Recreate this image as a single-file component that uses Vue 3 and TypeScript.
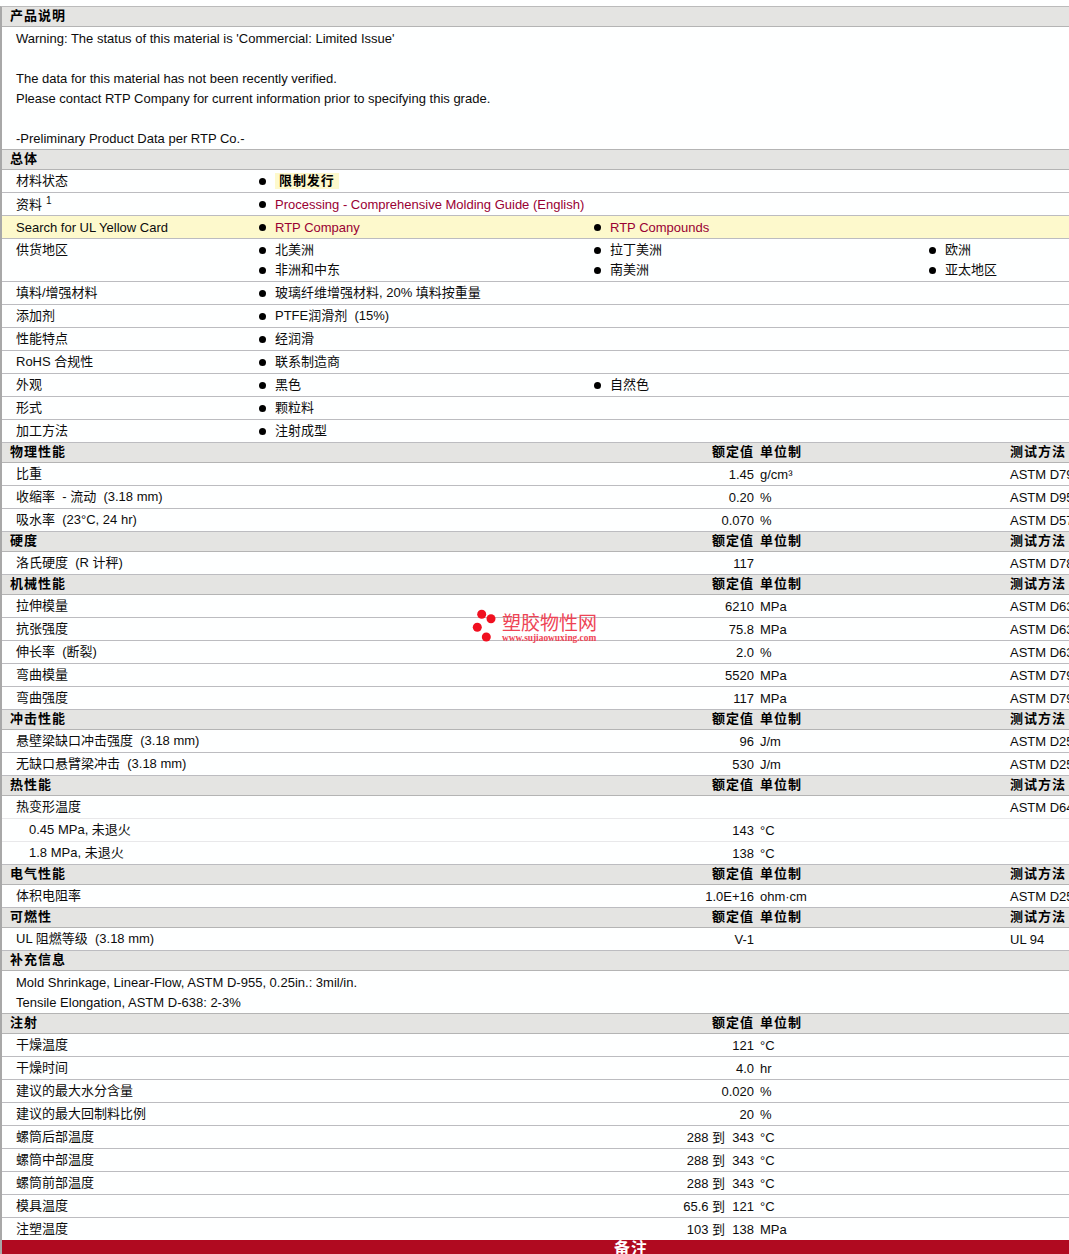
<script setup lang="ts">
interface Row { label: string; indent?: boolean; light?: boolean; val?: string; unit?: string; test?: string }
interface Section { title: string; head?: boolean; noTest?: boolean; rows?: Row[]; notes?: string[] }
const warn: string[] = [
  "Warning: The status of this material is 'Commercial: Limited Issue'",
  '\u00a0',
  'The data for this material has not been recently verified.',
  'Please contact RTP Company for current information prior to specifying this grade.',
  '\u00a0',
  '-Preliminary Product Data per RTP Co.-',
]
interface Gen { label: string; sup?: string; yellow?: boolean; link?: boolean; tag?: boolean; items: string[] }
const general: Gen[] = [
  { label: '材料状态', tag: true, items: ['限制发行'] },
  { label: '资料', sup: '1', link: true, items: ['Processing - Comprehensive Molding Guide (English)'] },
  { label: 'Search for UL Yellow Card', yellow: true, link: true, items: ['RTP Company', 'RTP Compounds'] },
  { label: '供货地区', items: ['北美洲', '拉丁美洲', '欧洲', '非洲和中东', '南美洲', '亚太地区'] },
  { label: '填料/增强材料', items: ['玻璃纤维增强材料, 20% 填料按重量'] },
  { label: '添加剂', items: ['PTFE润滑剂\u00a0 (15%)'] },
  { label: '性能特点', items: ['经润滑'] },
  { label: 'RoHS 合规性', items: ['联系制造商'] },
  { label: '外观', items: ['黑色', '自然色'] },
  { label: '形式', items: ['颗粒料'] },
  { label: '加工方法', items: ['注射成型'] },
]
const sections: Section[] = [
  { title: '物理性能', head: true, rows: [
    { label: '比重', val: '1.45', unit: 'g/cm³', test: 'ASTM D792' },
    { label: '收缩率\u00a0 - 流动\u00a0 (3.18 mm)', val: '0.20', unit: '%', test: 'ASTM D955' },
    { label: '吸水率\u00a0 (23°C, 24 hr)', val: '0.070', unit: '%', test: 'ASTM D570' },
  ] },
  { title: '硬度', head: true, rows: [
    { label: '洛氏硬度\u00a0 (R 计秤)', val: '117', test: 'ASTM D785' },
  ] },
  { title: '机械性能', head: true, rows: [
    { label: '拉伸模量', val: '6210', unit: 'MPa', test: 'ASTM D638' },
    { label: '抗张强度', val: '75.8', unit: 'MPa', test: 'ASTM D638' },
    { label: '伸长率\u00a0 (断裂)', val: '2.0', unit: '%', test: 'ASTM D638' },
    { label: '弯曲模量', val: '5520', unit: 'MPa', test: 'ASTM D790' },
    { label: '弯曲强度', val: '117', unit: 'MPa', test: 'ASTM D790' },
  ] },
  { title: '冲击性能', head: true, rows: [
    { label: '悬壁梁缺口冲击强度\u00a0 (3.18 mm)', val: '96', unit: 'J/m', test: 'ASTM D256' },
    { label: '无缺口悬臂梁冲击\u00a0 (3.18 mm)', val: '530', unit: 'J/m', test: 'ASTM D256' },
  ] },
  { title: '热性能', head: true, rows: [
    { label: '热变形温度', light: true, test: 'ASTM D648' },
    { label: '0.45 MPa, 未退火', indent: true, light: true, val: '143', unit: '°C' },
    { label: '1.8 MPa, 未退火', indent: true, val: '138', unit: '°C' },
  ] },
  { title: '电气性能', head: true, rows: [
    { label: '体积电阻率', val: '1.0E+16', unit: 'ohm·cm', test: 'ASTM D257' },
  ] },
  { title: '可燃性', head: true, rows: [
    { label: 'UL 阻燃等级\u00a0 (3.18 mm)', val: 'V-1', test: 'UL 94' },
  ] },
  { title: '补充信息', notes: ['Mold Shrinkage, Linear-Flow, ASTM D-955, 0.25in.: 3mil/in.', 'Tensile Elongation, ASTM D-638: 2-3%'] },
  { title: '注射', head: true, noTest: true, rows: [
    { label: '干燥温度', val: '121', unit: '°C' },
    { label: '干燥时间', val: '4.0', unit: 'hr' },
    { label: '建议的最大水分含量', val: '0.020', unit: '%' },
    { label: '建议的最大回制料比例', val: '20', unit: '%' },
    { label: '螺筒后部温度', val: '288 到\u00a0 343', unit: '°C' },
    { label: '螺筒中部温度', val: '288 到\u00a0 343', unit: '°C' },
    { label: '螺筒前部温度', val: '288 到\u00a0 343', unit: '°C' },
    { label: '模具温度', val: '65.6 到\u00a0 121', unit: '°C' },
    { label: '注塑温度', val: '103 到\u00a0 138', unit: 'MPa' },
  ] },
]
</script>

<template>
  <div class="page">
    <div class="sheet">
      <div class="sec"><span class="stitle">产品说明</span></div>
      <div class="desc"><div v-for="(w, i) in warn" :key="i" class="dline">{{ w }}</div></div>

      <div class="sec"><span class="stitle">总体</span></div>
      <div v-for="g in general" :key="g.label" class="gen" :class="{ yellow: g.yellow }">
        <div class="glabel" :class="{ lowered: g.sup || g.yellow }">{{ g.label }}<sup v-if="g.sup">{{ g.sup }}</sup></div>
        <ul class="gitems">
          <li v-for="it in g.items" :key="it" :class="{ link: g.link }">
            <span class="dot"></span><span class="itext" :class="{ tag: g.tag }">{{ it }}</span>
          </li>
        </ul>
      </div>

      <template v-for="s in sections" :key="s.title">
        <div class="sec">
          <span class="stitle">{{ s.title }}</span>
          <template v-if="s.head">
            <span class="val">额定值</span><span class="unit">单位制</span>
            <span class="test"><template v-if="!s.noTest">测试方法</template></span>
          </template>
        </div>
        <div v-if="s.notes" class="notes"><div v-for="n in s.notes" :key="n" class="dline">{{ n }}</div></div>
        <div v-for="r in s.rows" :key="r.label" class="row" :class="{ light: r.light }">
          <span class="stitle" :class="{ indent: r.indent }">{{ r.label }}</span>
          <span class="val">{{ r.val }}</span><span class="unit">{{ r.unit }}</span><span class="test">{{ r.test }}</span>
        </div>
      </template>
      <div class="red">备注</div>
    </div>

    <div class="mark">
      <svg class="dots" width="26" height="34" viewBox="0 0 26 34">
        <circle cx="9.7" cy="5.3" r="4.5" fill="#f01020" />
        <circle cx="19" cy="9.7" r="4.5" fill="#f01020" />
        <circle cx="5.3" cy="18.3" r="4.5" fill="#f01020" />
        <circle cx="14.3" cy="28" r="4.5" fill="#f01020" />
      </svg>
      <div class="mtext">
        <div class="mcn">塑胶物性网</div>
        <div class="men">www.sujiaowuxing.com</div>
      </div>
    </div>
  </div>
</template>

<style>
html, body { margin: 0; background: #feffff; overflow: hidden; }
</style>

<style scoped>
.page {
  position: relative;
  width: 1069px;
  height: 1254px;
  overflow: hidden;
  padding-top: 6px;
  box-sizing: border-box;
  font: 13px/20px "Liberation Sans", "Noto Sans CJK SC", sans-serif;
  color: #0c0c0c;
}
.sheet {
  border-left: 2px solid #a8a8a8;
  width: 1258px;
  box-sizing: border-box;
  border-top: 1px solid #bbb;
}
.sec {
  display: flex;
  height: 19px;
  line-height: 18px;
  background: #e4e4e2;
  border-bottom: 1px solid #b4b4b4;
  font-weight: 700;
  letter-spacing: 1px;
  color: #000;
}
.desc { padding: 2px 0 0 14px; height: 120px; border-bottom: 1px solid #b4b4b4; }
.notes { padding: 2px 0 0 14px; height: 40px; border-bottom: 1px solid #b4b4b4; }
.dline { height: 20px; white-space: nowrap; }
.gen {
  display: flex;
  border-bottom: 1px solid #bcbcc0;
  padding: 1px 0;
  min-height: 20px;
}
.yellow { background: #fdf9cc; }
.glabel { width: 244px; padding-left: 14px; flex: none; white-space: nowrap; }
.lowered { padding-top: 1px; height: 19px; }
sup { font-size: 10px; line-height: 0; margin-left: 4px; vertical-align: 5px; }
.gitems {
  list-style: none;
  margin: 0;
  padding: 0;
  display: grid;
  grid-template-columns: 335px 335px 335px;
  grid-auto-rows: 20px;
}
.gitems li { display: flex; align-items: center; white-space: nowrap; }
.dot {
  width: 7px;
  height: 7px;
  border-radius: 50%;
  background: #000;
  margin: 0 9px 0 -1px;
  flex: none;
}
.link { color: #990033; }
.link .itext { padding-top: 2px; }
.tag {
  font-weight: 700;
  letter-spacing: 0.9px;
  background: #fdf9cc;
  padding: 0 4px;
  line-height: 16px;
  color: #000;
}
.row {
  display: flex;
  height: 22px;
  line-height: 21px;
  border-bottom: 1px solid #bcbcc0;
}
.row.light { border-bottom-color: #e8e8ea; }
.stitle { width: 650px; flex: none; padding-left: 14px; box-sizing: border-box; white-space: nowrap; }
.sec .stitle { padding-left: 8px; }
.row .indent { padding-left: 27px; }
.val { width: 102px; flex: none; text-align: right; white-space: nowrap; }
.unit { width: 256px; flex: none; padding-left: 6px; box-sizing: border-box; white-space: nowrap; }
.test { flex: none; white-space: nowrap; }
.row .val, .row .unit, .row .test { line-height: 23px; }
.red {
  background: #b00a20;
  color: #fff;
  font-size: 16px;
  font-weight: 700;
  letter-spacing: 1px;
  height: 20px;
  line-height: 18px;
  margin-top: -1px;
  padding-left: 2px;
  position: relative;
  text-align: center;
}
.mark {
  position: absolute;
  left: 472px;
  top: 609px;
  display: flex;
  gap: 4px;
  color: #ee4455;
}
.dots { display: block; }
.mtext { padding-top: 5px; }
.mcn { font-size: 19px; line-height: 20px; font-weight: 400; }
.men { font: 700 9.4px/8px "Liberation Serif", serif; }
</style>
